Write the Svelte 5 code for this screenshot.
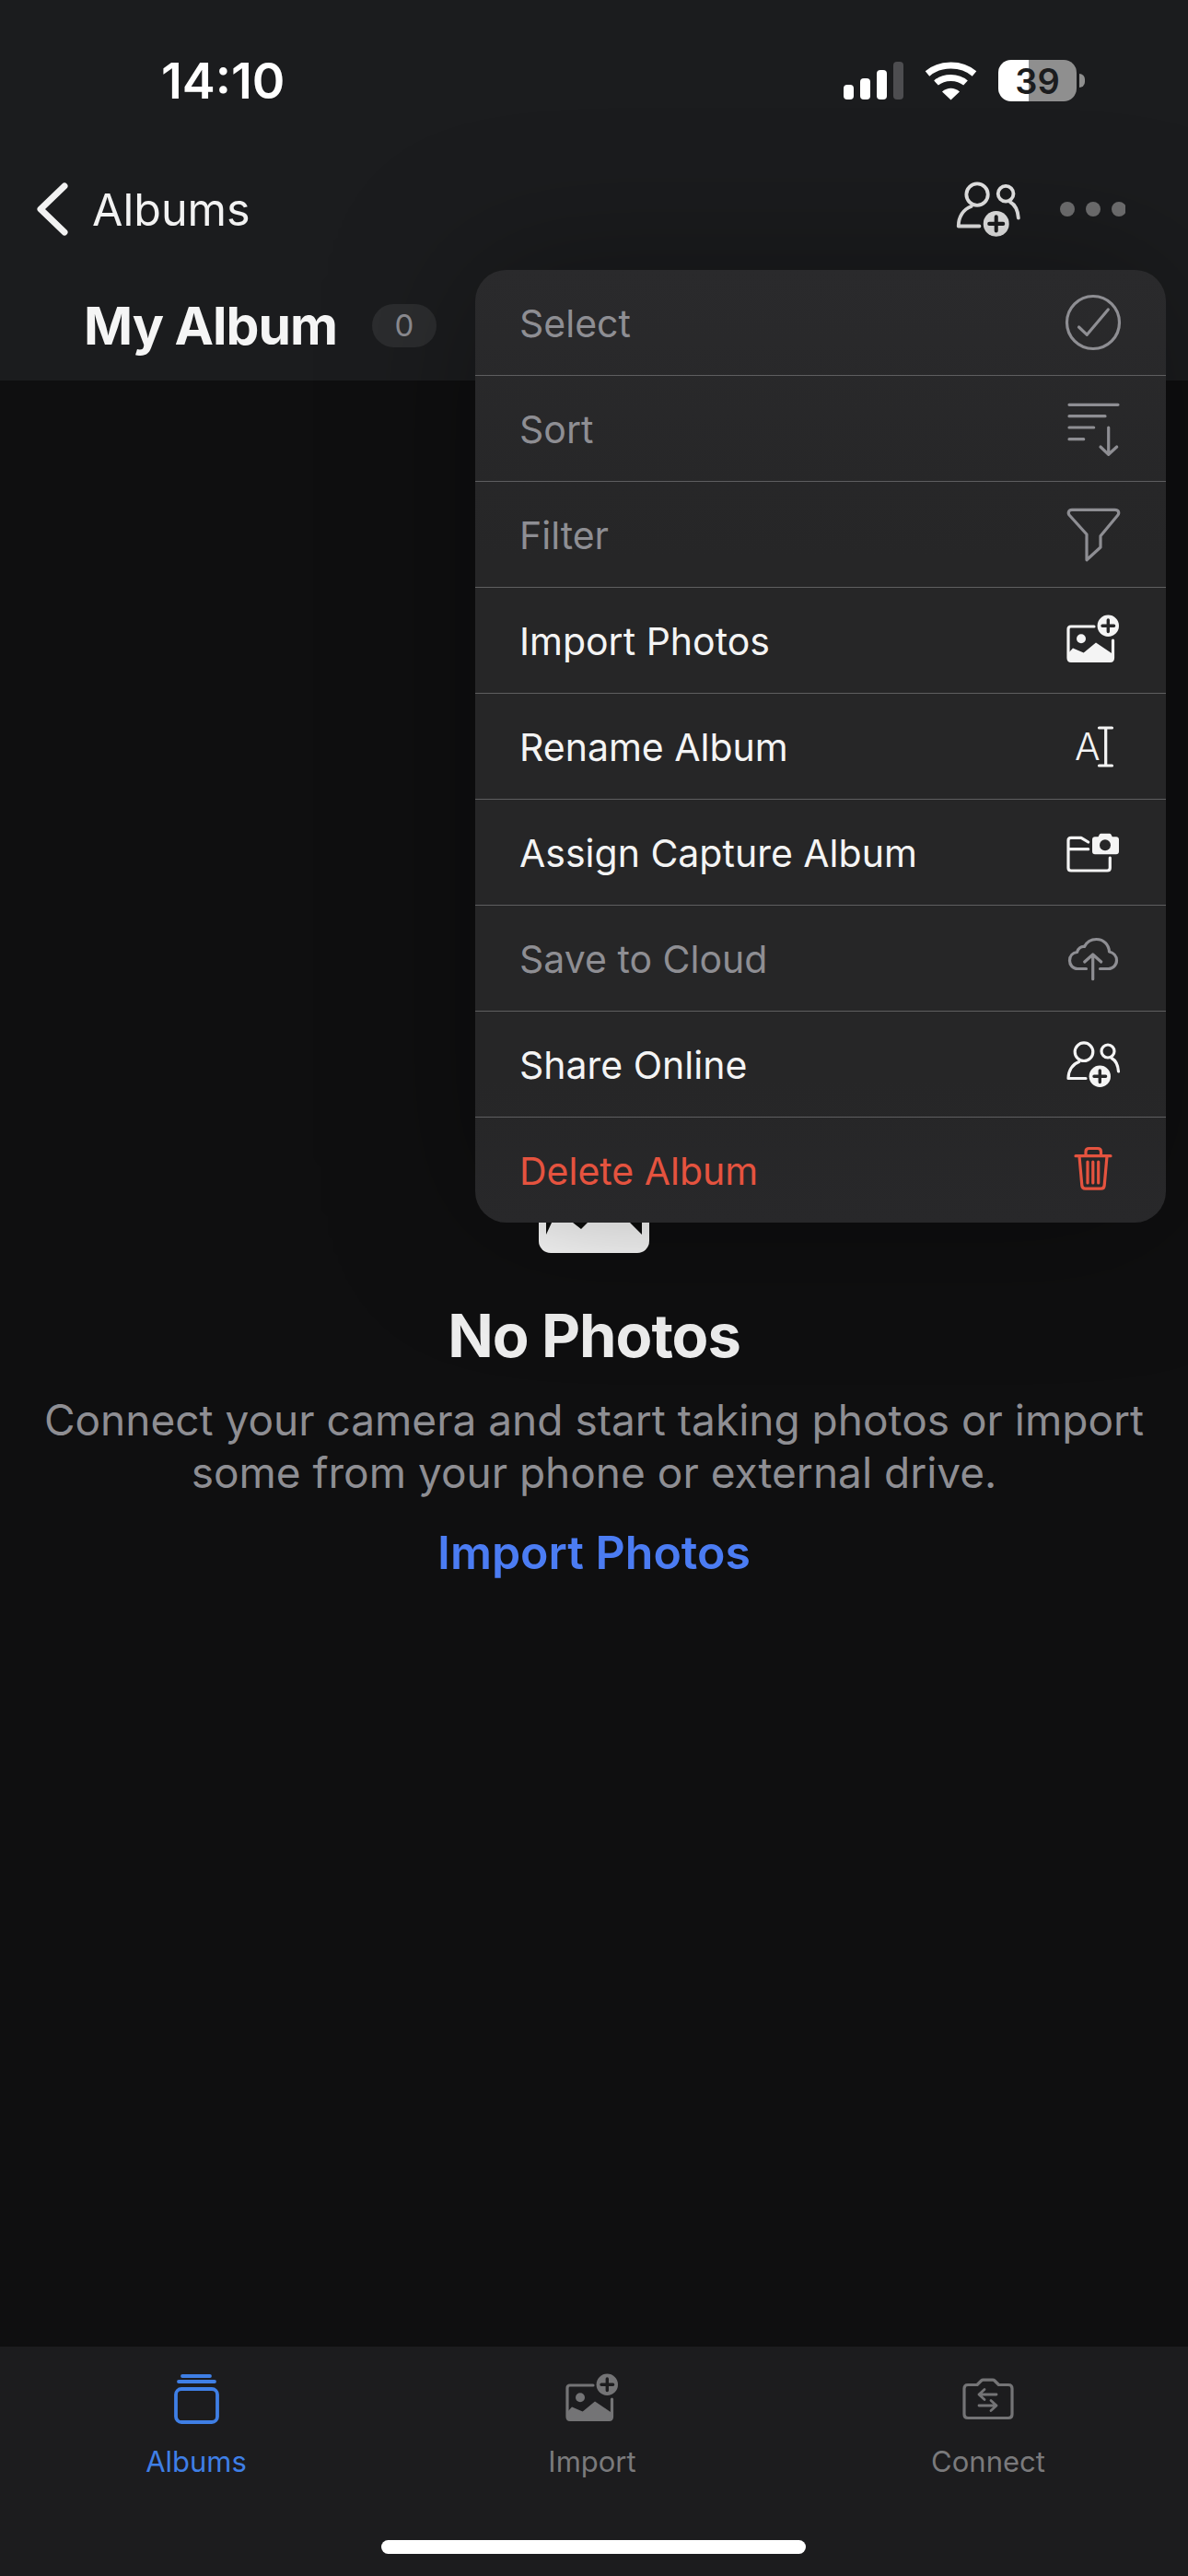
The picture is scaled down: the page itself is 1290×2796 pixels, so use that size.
<script>
  const items = [
    { label: 'Select', icon: 'select', tone: 'muted' },
    { label: 'Sort', icon: 'sort', tone: 'muted' },
    { label: 'Filter', icon: 'filter', tone: 'muted' },
    { label: 'Import Photos', icon: 'import', tone: 'on' },
    { label: 'Rename Album', icon: 'rename', tone: 'on' },
    { label: 'Assign Capture Album', icon: 'capture', tone: 'on' },
    { label: 'Save to Cloud', icon: 'cloud', tone: 'muted' },
    { label: 'Share Online', icon: 'share', tone: 'on' },
    { label: 'Delete Album', icon: 'trash', tone: 'danger' },
  ];

  const tabs = [
    { label: 'Albums', icon: 'albums', active: true },
    { label: 'Import', icon: 'import', active: false },
    { label: 'Connect', icon: 'connect', active: false },
  ];
</script>

{#snippet icon(name, size = 72, box = 72)}
  <svg class="icon" width={size} height={size} viewBox="0 0 {box} {box}" fill="none" stroke="currentColor" stroke-width="3.2" stroke-linecap="round" stroke-linejoin="round">
    {#if name === 'select'}
      <circle cx="36" cy="36" r="28.5" />
      <path d="M20.5 41 29.3 49.3 52.3 22" />
    {:else if name === 'sort'}
      <path d="M10 10.3H63M10 22.7H49M10 35H36.7M10 47.7H25.7M52.7 35V64M44 56l8.7 8.3L61.7 56" />
    {:else if name === 'filter'}
      <path d="M13 9.3H59.5C63.5 9.3 65 12.5 62.5 15.5L44 37.7V50L29 63.7V36L10.5 15.5C8 12.5 9.5 9.3 13 9.3Z" />
    {:else if name === 'import'}
      <path d="M37 21H12C10 21 9 22 9 24V55C9 57.5 10 58.5 12 58.5H54.5C56.5 58.5 57.5 57.5 57.5 55V36" />
      <path class="solid" d="M9 50 14 44.5 25.7 49.5 39 38.5 57.5 51V55C57.5 57.5 56.5 58.5 54.5 58.5H12C10 58.5 9 57.5 9 55Z" stroke="none" />
      <circle class="solid" cx="23" cy="34.3" r="5" stroke="none" />
      <circle class="solid" cx="52.3" cy="20.3" r="11.7" stroke="none" />
      <path class="cut" d="M52.3 14V26.6M46 20.3H58.6" />
    {:else if name === 'rename'}
      <text class="glyph" x="16" y="51" stroke="none">A</text>
      <path d="M49.7 16V57M42.5 16H56.5M42.5 57H56.5" />
    {:else if name === 'capture'}
      <path d="M30.7 25 23 20.3H12C10 20.3 9 21.3 9 23.3V53C9 55 10 56 12 56H51.3C53.3 56 54.3 55 54.3 53V42M9 32.7H30.7" />
      <path class="solid" d="M38 19.3H41.5L43 16.5C43.3 16 43.8 15.8 44.3 15.8H54C54.5 15.8 55 16 55.3 16.5L56.8 19.3H61C62.8 19.3 64 20.5 64 22.3V35.3C64 37.1 62.8 38.3 61 38.3H38C36.2 38.3 35 37.1 35 35.3V22.3C35 20.5 36.2 19.3 38 19.3Z" stroke="none" />
      <circle class="cutfill" cx="49" cy="28.3" r="6" stroke="none" />
    {:else if name === 'cloud'}
      <path d="M28.5 47.5H19C14 47.5 10.5 43.5 10.5 38.5 10.5 33.5 14 30 18.5 29.5 19.5 25.5 23 23 26.5 23.5 29 18.5 34 15.5 39.5 15.5 47.5 15.5 53 21.5 53.5 29 58 30 61.5 33.5 61.5 38.5 61.5 43.5 57.5 47.5 52.5 47.5H43.5" />
      <path d="M35.7 58.7V32M26.7 40 35.7 32 44.7 40" />
    {:else if name === 'share'}
      <circle cx="26" cy="22.7" r="9.8" />
      <circle cx="52" cy="22" r="7" />
      <path d="M20.7 33.5C13.5 36 9 43 9 51.5H28" />
      <path d="M56 29.5C60.5 32 63 37 63.5 44" />
      <circle class="solid" cx="43.3" cy="49.3" r="11.7" stroke="none" />
      <path class="cut" d="M43.3 43V55.6M37 49.3H49.6" />
    {:else if name === 'trash'}
      <path d="M17 20.7H55M28 20.7V16C28 13.5 29.5 12.5 31.5 12.5H41C43 12.5 44.5 13.5 44.5 16V20.7M21 21 23.8 52.5C24 55 25.5 56.2 27.5 56.2H44.5C46.5 56.2 48 55 48.2 52.5L51 21M30 27V50M35.8 27V50M41.7 27V50" />
    {:else if name === 'albums'}
      <g stroke-width="3.8">
        <rect x="8" y="19" width="45" height="36" rx="6" />
        <path d="M11 11H50M15 5H45" />
      </g>
    {:else if name === 'connect'}
      <path d="M8 14.5H18L22.5 10C23 9.5 23.5 9.2 24.5 9.2H35C36 9.2 36.5 9.5 37 10L41.5 14.5H52C54.5 14.5 56 16 56 18.5V46.5C56 49 54.5 50.5 52 50.5H8C5.5 50.5 4 49 4 46.5V18.5C4 16 5.5 14.5 8 14.5Z" />
      <path d="M39 25H20M26 19.5 20 25 26 30.5M20 37H39M33 31.5 39 37 33 42.5" stroke-width="2.8" />
    {/if}
  </svg>
{/snippet}

<div class="phone">
  <header class="top">
    <div class="status">
      <span class="time">14:10</span>
      <div class="indicators">
        <div class="signal">
          <i></i><i></i><i></i><i></i>
        </div>
        <svg class="wifi" width="57" height="42" viewBox="0 0 57 42" fill="none" stroke="#fff" stroke-width="7">
          <path d="M3 13C17 1 40 1 54 13" />
          <path d="M12.5 23C21 15.5 36 15.5 44.5 23" />
          <path d="M19 32.5 28.5 41.5 38 32.5C32 27.5 25 27.5 19 32.5Z" fill="#fff" stroke="none" />
        </svg>
        <div class="battery"><span>39</span></div>
      </div>
    </div>

    <nav class="bar">
      <div class="back">
        <svg width="34" height="58" viewBox="0 0 34 58" fill="none" stroke="#f2f2f2" stroke-width="7" stroke-linecap="round" stroke-linejoin="round">
          <path d="M30 4 4 29 30 54" />
        </svg>
        <span>Albums</span>
      </div>
      <div class="actions">
        <div class="people">{@render icon('share', 86)}</div>
        <svg width="72" height="16" viewBox="0 0 72 16" fill="#6f6f70">
          <circle cx="9" cy="8" r="8" />
          <circle cx="37" cy="8" r="8" />
          <circle cx="65" cy="8" r="8" />
        </svg>
      </div>
    </nav>

    <div class="title">
      <h1>My Album</h1>
      <span class="count">0</span>
    </div>
  </header>

  <main class="empty">
    <svg class="placeholder" width="120" height="100" viewBox="0 0 120 100">
      <rect width="120" height="100" rx="13" fill="#fff" />
      <path d="M8 50H112V80L99 67 88 50H70L46 74 37 67 32 50H22L8 80Z" fill="#0c0d0c" />
    </svg>
    <h2>No Photos</h2>
    <p>Connect your camera and start taking photos or import<br />some from your phone or external drive.</p>
    <span class="link">Import Photos</span>
  </main>

  <footer class="tabbar">
    <div class="tabs">
      {#each tabs as tab}
        <div class="tab" class:active={tab.active}>
          <div class="tab-icon">
            {#if tab.icon === 'import'}
              {@render icon(tab.icon)}
            {:else}
              {@render icon(tab.icon, 60, 60)}
            {/if}
          </div>
          <span>{tab.label}</span>
        </div>
      {/each}
    </div>
    <div class="home"></div>
  </footer>

  <ul class="menu">
    {#each items as item}
      <li class={item.tone}>
        <span>{item.label}</span>
        {@render icon(item.icon)}
      </li>
    {/each}
  </ul>
</div>

<style>
  :global(body) {
    margin: 0;
    background: #0f0f10;
  }

  .phone {
    --cut: #272728;
    position: relative;
    width: 1290px;
    height: 2796px;
    display: flex;
    flex-direction: column;
    overflow: hidden;
    background: #0f0f10;
    color: #fff;
    font-family: Inter, "Noto Sans", sans-serif;
  }

  .top {
    height: 413px;
    background: #1b1c1e;
  }

  .status {
    height: 175px;
    box-sizing: border-box;
    padding: 0 112px 0 175px;
    display: flex;
    align-items: center;
    justify-content: space-between;
  }

  .time {
    font-size: 54px;
    font-weight: 600;
  }

  .indicators {
    display: flex;
    align-items: center;
    gap: 23px;
  }

  .signal {
    display: flex;
    align-items: flex-end;
    gap: 7px;
    height: 41px;
  }

  .signal i {
    display: block;
    width: 11px;
    border-radius: 4px;
    background: #fff;
  }

  .signal i:nth-child(1) { height: 16px; }
  .signal i:nth-child(2) { height: 23px; }
  .signal i:nth-child(3) { height: 32px; }
  .signal i:nth-child(4) { height: 41px; background: #4d4d50; }

  .battery {
    position: relative;
    width: 85px;
    height: 45px;
    margin-right: 9px;
    border-radius: 14px;
    display: flex;
    align-items: center;
    justify-content: center;
    background: linear-gradient(90deg, #fff 33px, #8f8f8f 33px);
    color: #1b1c1e;
    font-size: 38px;
    font-weight: 600;
  }

  .battery::after {
    content: '';
    position: absolute;
    left: 88px;
    top: 15px;
    width: 6px;
    height: 15px;
    border-radius: 0 8px 8px 0;
    background: #8f8f8f;
  }

  .bar {
    height: 104px;
    box-sizing: border-box;
    padding: 0 68px 0 40px;
    display: flex;
    align-items: center;
    justify-content: space-between;
  }

  .back {
    display: flex;
    align-items: center;
    gap: 26px;
    font-size: 48.5px;
    color: #f2f2f2;
  }

  .actions {
    display: flex;
    align-items: center;
    gap: 34px;
  }

  .people {
    display: flex;
    color: #e6e6e6;
    --cut: #1b1c1e;
  }

  .title {
    height: 134px;
    box-sizing: border-box;
    padding: 14px 0 0 91px;
    display: flex;
    align-items: center;
    gap: 38px;
  }

  h1 {
    margin: 0;
    font-size: 57px;
    font-weight: 700;
    letter-spacing: -1px;
    color: #f5f5f5;
  }

  .count {
    width: 70px;
    height: 47px;
    border-radius: 24px;
    display: flex;
    align-items: center;
    justify-content: center;
    background: #2c2d2f;
    color: #8e8e93;
    font-size: 33px;
  }

  .empty {
    flex: 1;
    padding-top: 847px;
    display: flex;
    flex-direction: column;
    align-items: center;
    text-align: center;
  }

  .placeholder {
    display: block;
  }

  h2 {
    margin: 50px 0 0;
    font-size: 65px;
    line-height: 80px;
    font-weight: 700;
    letter-spacing: -1px;
    color: #eeeeee;
  }

  .empty p {
    margin: 23px 0 0;
    font-size: 46px;
    line-height: 57px;
    color: #8e8e93;
  }

  .link {
    margin-top: 28px;
    font-size: 50px;
    line-height: 60px;
    font-weight: 600;
    color: #4b7cf3;
  }

  .tabbar {
    --cut: #1c1c1e;
    height: 249px;
    display: flex;
    flex-direction: column;
    background: #1c1c1e;
  }

  .tabs {
    margin: 21px 0 0 -2px;
    display: grid;
    grid-template-columns: repeat(3, 430px);
  }

  .tab {
    display: flex;
    flex-direction: column;
    align-items: center;
    color: #7a7a7c;
    font-size: 31px;
  }

  .tab-icon {
    color: #747476;
  }

  .tab.active,
  .tab.active .tab-icon {
    color: #3f7fe6;
  }

  .tab-icon {
    height: 72px;
    display: flex;
    align-items: center;
  }

  .tab span {
    margin-top: 12px;
    line-height: 40px;
  }

  .home {
    width: 461px;
    height: 15px;
    margin: auto 0 24px 414px;
    border-radius: 8px;
    background: #fff;
  }

  .menu {
    position: absolute;
    top: 293px;
    left: 516px;
    width: 750px;
    margin: 0;
    padding: 0;
    list-style: none;
    border-radius: 34px;
    background: linear-gradient(#2a2a2c, #262627 30%, #262627 85%, #28282a);
    box-shadow: 0 0 160px rgba(0, 0, 0, 0.35);
    font-size: 41px;
  }

  .menu li {
    height: 114px;
    box-sizing: content-box;
    padding: 0 43px 0 48px;
    display: flex;
    align-items: center;
    justify-content: space-between;
  }

  .menu li span {
    padding-top: 2px;
  }

  .menu li + li {
    border-top: 1px solid #5e5e60;
  }

  .menu li.muted { color: #8e8e93; }
  .menu li.on { color: #f4f4f4; }
  .menu li.danger { color: #e5533f; }

  .icon {
    display: block;
    flex: none;
  }

  .solid {
    fill: currentColor;
  }

  .cut {
    stroke: var(--cut);
    stroke-width: 3.4;
  }

  .cutfill {
    fill: var(--cut);
  }

  .glyph {
    fill: currentColor;
    font-size: 41px;
    font-weight: 300;
  }
</style>
